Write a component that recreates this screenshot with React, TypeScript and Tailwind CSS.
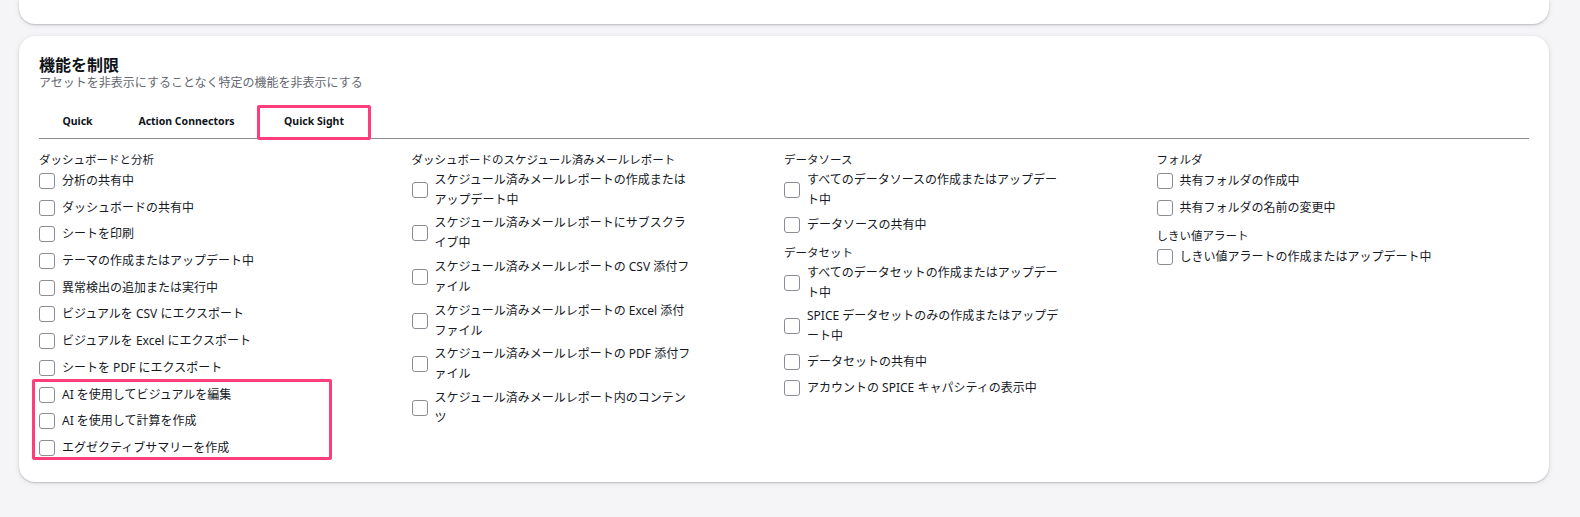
import React from 'react';

type Item = string;

interface Section {
  title: string;
  items: Item[];
  highlight?: Item[];
}

const columns: Section[][] = [
  [
    {
      title: 'ダッシュボードと分析',
      items: [
        '分析の共有中',
        'ダッシュボードの共有中',
        'シートを印刷',
        'テーマの作成またはアップデート中',
        '異常検出の追加または実行中',
        'ビジュアルを CSV にエクスポート',
        'ビジュアルを Excel にエクスポート',
        'シートを PDF にエクスポート',
      ],
      highlight: ['AI を使用してビジュアルを編集', 'AI を使用して計算を作成', 'エグゼクティブサマリーを作成'],
    },
  ],
  [
    {
      title: 'ダッシュボードのスケジュール済みメールレポート',
      items: [
        'スケジュール済みメールレポートの作成またはアップデート中',
        'スケジュール済みメールレポートにサブスクライブ中',
        'スケジュール済みメールレポートの CSV 添付ファイル',
        'スケジュール済みメールレポートの Excel 添付ファイル',
        'スケジュール済みメールレポートの PDF 添付ファイル',
        'スケジュール済みメールレポート内のコンテンツ',
      ],
    },
  ],
  [
    {
      title: 'データソース',
      items: ['すべてのデータソースの作成またはアップデート中', 'データソースの共有中'],
    },
    {
      title: 'データセット',
      items: [
        'すべてのデータセットの作成またはアップデート中',
        'SPICE データセットのみの作成またはアップデート中',
        'データセットの共有中',
        'アカウントの SPICE キャパシティの表示中',
      ],
    },
  ],
  [
    {
      title: 'フォルダ',
      items: ['共有フォルダの作成中', '共有フォルダの名前の変更中'],
    },
    {
      title: 'しきい値アラート',
      items: ['しきい値アラートの作成またはアップデート中'],
    },
  ],
];

function CheckRow({ label }: { label: string }) {
  return (
    <label className="flex min-h-[23px] items-center gap-[7px]">
      <span className="h-4 w-4 shrink-0 rounded-[3px] border border-[#8c8c94] bg-white" />
      <span className="max-w-[258px] text-[12px] leading-5 text-[#16191f]">{label}</span>
    </label>
  );
}

function SectionBlock({ section }: { section: Section }) {
  return (
    <div className="flex flex-col">
      <div className="h-4 text-[11.5px] leading-4 text-[#16191f]">{section.title}</div>
      <div className="mt-[1.5px] flex flex-col gap-[3.7px]">
        {section.items.map((item) => (
          <CheckRow key={item} label={item} />
        ))}
        {section.highlight && (
          <div className="relative flex flex-col gap-[3.7px]">
            {/* annotation box */}
            <span className="pointer-events-none absolute -left-[7px] -top-[4px] -bottom-[1px] w-[300px] rounded-[2px] border-[3px] border-[#ff3d7a]" />
            {section.highlight.map((item) => (
              <CheckRow key={item} label={item} />
            ))}
          </div>
        )}
      </div>
    </div>
  );
}

const tabs = ['Quick', 'Action Connectors', 'Quick Sight'];

export default function App() {
  return (
    <div className="min-h-screen bg-[#f5f5f7] font-['Noto_Sans','Noto_Sans_CJK_JP',sans-serif]">
      <div className="ml-[19px] w-[1530px]">
        {/* previous card, scrolled mostly out of view */}
        <div className="h-[24px] rounded-b-2xl bg-white shadow-[0_1px_2px_rgba(0,7,22,0.2),0_1px_6px_rgba(0,7,22,0.08)]" />

        <div className="mt-[12px] rounded-2xl bg-white px-5 pb-[23px] pt-[19px] shadow-[0_1px_2px_rgba(0,7,22,0.2),0_1px_6px_rgba(0,7,22,0.08)]">
          <h2 className="text-base font-bold leading-5 text-[#0f141a]">機能を制限</h2>
          <p className="text-[12px] leading-4 text-[#656871]">アセットを非表示にすることなく特定の機能を非表示にする</p>

          {/* Tabs */}
          <div className="mt-[15px] flex border-b border-[#8c8c94]">
            {tabs.map((tab, i) => (
              <div
                key={tab}
                className={
                  i === 2
                    ? 'relative flex h-8 w-[114px] items-center justify-center text-[10.5px] font-bold text-[#0f141a]'
                    : i === 0
                      ? 'flex h-8 w-[77px] items-center justify-center text-[10.5px] font-bold text-[#0f141a]'
                      : 'flex h-8 w-[141px] items-center justify-center text-[10.5px] font-bold text-[#0f141a]'
                }
              >
                {tab}
                {i === 2 && (
                  <span className="pointer-events-none absolute inset-x-0 -top-[1px] -bottom-[2px] rounded-[2px] border-[3px] border-[#ff3d7a]" />
                )}
              </div>
            ))}
          </div>

          {/* Columns */}
          <div className="mt-[13px] grid grid-cols-4">
            {columns.map((col, ci) => (
              <div key={ci} className="flex flex-col gap-[9px]">
                {col.map((section) => (
                  <SectionBlock key={section.title} section={section} />
                ))}
              </div>
            ))}
          </div>
        </div>
      </div>
    </div>
  );
}
